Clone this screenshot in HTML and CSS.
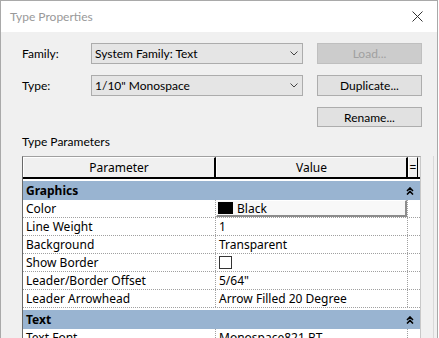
FILE: index.html
```html
<!DOCTYPE html>
<html>
<head>
    <title>Type Properties</title>
    <link rel="stylesheet" href="styles.css">
</head>
<body>
    <div class="window">
        <div class="titlebar">
            <span class="title">Type Properties</span>
            <svg class="close" width="11" height="11" viewBox="0 0 11 11">
                <path d="M0.5 0.5 L10.5 10.5 M10.5 0.5 L0.5 10.5" stroke="#333" stroke-width="1" fill="none"/>
            </svg>
        </div>

        <div class="content">
            <div class="top-grid">
                <span class="label">Family:</span>
                <div class="select">
                    <span>System Family: Text</span>
                    <svg width="8" height="5" viewBox="0 0 8 5"><path d="M0.5 0.5 L4 4 L7.5 0.5" stroke="#444" fill="none"/></svg>
                </div>
                <button class="btn disabled">Load...</button>

                <span class="label">Type:</span>
                <div class="select">
                    <span>1/10" Monospace</span>
                    <svg width="8" height="5" viewBox="0 0 8 5"><path d="M0.5 0.5 L4 4 L7.5 0.5" stroke="#444" fill="none"/></svg>
                </div>
                <button class="btn">Duplicate...</button>

                <span></span>
                <span></span>
                <button class="btn">Rename...</button>
            </div>

            <div class="section-label">Type Parameters</div>

            <div class="params-wrap">
                <div class="params">
                    <div class="head">
                        <div class="hcell param">Parameter</div>
                        <div class="hcell value">Value</div>
                        <div class="hcell eq">=</div>
                    </div>

                    <div class="group">
                        <span>Graphics</span>
                        <svg width="8" height="8" viewBox="0 0 8 8"><path d="M1 4 L4 1 L7 4 M1 7.5 L4 4.5 L7 7.5" stroke="#000" stroke-width="1.6" fill="none"/></svg>
                    </div>
                    <div class="row">
                        <div class="cell param">Color</div>
                        <div class="cell value">
                            <div class="color-box"><span class="swatch"></span>Black</div>
                        </div>
                    </div>
                    <div class="row">
                        <div class="cell param">Line Weight</div>
                        <div class="cell value">1</div>
                    </div>
                    <div class="row">
                        <div class="cell param">Background</div>
                        <div class="cell value">Transparent</div>
                    </div>
                    <div class="row">
                        <div class="cell param">Show Border</div>
                        <div class="cell value"><span class="checkbox"></span></div>
                    </div>
                    <div class="row">
                        <div class="cell param">Leader/Border Offset</div>
                        <div class="cell value">5/64"</div>
                    </div>
                    <div class="row">
                        <div class="cell param">Leader Arrowhead</div>
                        <div class="cell value">Arrow Filled 20 Degree</div>
                    </div>

                    <div class="group">
                        <span>Text</span>
                        <svg width="8" height="8" viewBox="0 0 8 8"><path d="M1 4 L4 1 L7 4 M1 7.5 L4 4.5 L7 7.5" stroke="#000" stroke-width="1.6" fill="none"/></svg>
                    </div>
                    <div class="row">
                        <div class="cell param">Text Font</div>
                        <div class="cell value">Monospace821 BT</div>
                    </div>
                </div>
                <div class="scroll"></div>
            </div>
        </div>
    </div>
</body>
</html>
```

FILE: styles.css
```css
body {
    margin: 0;
    background-color: #ffffff;
    font-family: Lato, "Noto Sans", Arial, sans-serif;
    font-size: 12px;
    color: #000;
}

.window {
    width: 436px;
    height: 337px;
    border: 1px solid #a9a9a9;
    border-bottom: none;
    background-color: #f0f0f0;
    overflow: hidden;
}

.titlebar {
    height: 31px;
    background-color: #fff;
    display: flex;
    align-items: center;
    justify-content: space-between;
    padding: 0 14px 0 9px;
}

.title {
    color: #999;
    font-size: 12px;
    padding-bottom: 1px;
}

.content {
    padding: 11px 0 0 21px;
}

.top-grid {
    display: grid;
    grid-template-columns: 55px 212px 105px;
    grid-template-rows: 21px 21px 20px;
    column-gap: 14px;
    row-gap: 11px;
    align-items: center;
}

.select {
    box-sizing: border-box;
    height: 21px;
    background-color: #e5e5e5;
    border: 1px solid #acacac;
    display: flex;
    align-items: center;
    justify-content: space-between;
    padding: 0 4px 0 3px;
}

.btn {
    box-sizing: border-box;
    height: 100%;
    background-color: #e1e1e1;
    border: 1px solid #adadad;
    font-family: inherit;
    font-size: 12px;
    color: #000;
    padding: 0;
}

.btn.disabled {
    background-color: #cccccc;
    border-color: #bfbfbf;
    color: #a0a0a0;
}

.section-label {
    margin-top: 7px;
    height: 16px;
    line-height: 16px;
    margin-bottom: 6px;
}

.params-wrap {
    display: flex;
    font-family: "Noto Sans", Arial, sans-serif;
    font-size: 12px;
}

.params {
    width: 397px;
    border-left: 1px solid #696969;
    border-top: 1px solid #a0a0a0;
    border-right: 1px solid #c8c8c8;
    background-color: #fff;
}

.scroll {
    width: 12px;
    border-right: 1px solid #d9d9d9;
}

.head {
    display: flex;
    height: 20px;
    border-bottom: 2px solid #000;
    background-color: #f0f0f0;
}

.hcell {
    display: flex;
    align-items: center;
    justify-content: center;
    border-top: 1px solid #fff;
    border-left: 1px solid #fff;
    box-sizing: border-box;
}

.hcell.param {
    width: 193px;
    border-right: 2px solid #000;
}

.hcell.value {
    width: 192px;
    border-right: 2px solid #000;
}

.hcell.eq {
    width: 10px;
    border-right: 1px solid #000;
}

.group {
    margin-top: 2px;
    height: 19px;
    background-color: #99b4d1;
    display: flex;
    align-items: center;
    justify-content: space-between;
    padding: 0 6px 0 3px;
    font-weight: bold;
}

.row {
    display: flex;
    height: 17px;
    border-bottom: 1px dotted #a0a0a0;
}

.cell {
    display: flex;
    align-items: center;
    box-sizing: border-box;
    height: 17px;
    white-space: nowrap;
}

.cell.param {
    width: 193px;
    padding-left: 3px;
    border-right: 1px dotted #a0a0a0;
}

.cell.value {
    width: 192px;
    padding-left: 3px;
    border-right: 1px dotted #a0a0a0;
}

.color-box {
    box-sizing: border-box;
    margin-left: -3px;
    width: 191px;
    height: 17px;
    display: flex;
    align-items: center;
    background-color: #f8f8f8;
    border-top: 1px solid #fff;
    border-left: 1px solid #fff;
    border-right: 2px solid #8c8c8c;
    border-bottom: 2px solid #8c8c8c;
    padding-left: 1px;
}

.swatch {
    width: 15px;
    height: 12px;
    background-color: #000;
    margin-right: 4px;
}

.checkbox {
    box-sizing: border-box;
    width: 13px;
    height: 13px;
    border: 1px solid #333;
    background-color: #fff;
}
```
